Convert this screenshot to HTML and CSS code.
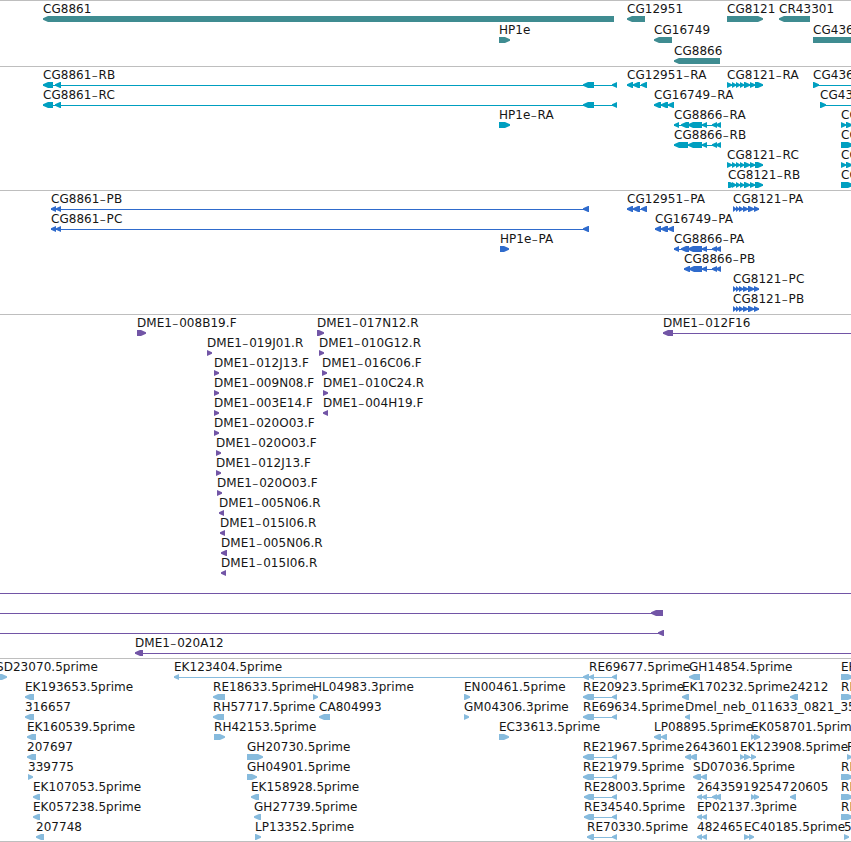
FILE: index.html
```
<!DOCTYPE html>
<html lang="en">
  <head>
    <meta charset="UTF-8" />
    <meta name="viewport" content="width=device-width, initial-scale=1.0" />
    <title>Genome tracks</title>
    <link rel="stylesheet" href="styles.css">
  </head>
  <body>
    <main class="browser">
      <section class="track genes" id="genes"></section>
      <section class="track transcripts" id="transcripts"></section>
      <section class="track proteins" id="proteins"></section>
      <section class="track bacs" id="bacs"></section>
      <section class="track ests" id="ests"></section>
    </main>
    <script src="tracks.js"></script>
  </body>
</html>
```

FILE: styles.css
```
* {
  box-sizing: border-box;
}

body {
  margin: 0;
  background: #fff;
}

.browser {
  height: 842px;
  overflow: hidden;
}

.track {
  border-top: 1px solid #bebebe;
  padding-bottom: 3px;
}

.row {
  display: block;
  width: 100%;
  height: 20px;
  overflow: visible;
}

.row text {
  font-family: "DejaVu Sans", sans-serif;
  font-size: 12px;
  letter-spacing: 0.04px;
  fill: #161616;
  white-space: pre;
}

.row .dash {
  font-size: 18px;
  font-weight: 200;
}

.row path {
  fill: currentColor;
}

.genes {
  color: #3f8c91;
  padding-bottom: 2px;
}

.genes .row {
  height: 21px;
}

.transcripts {
  color: #009fc0;
}

.proteins {
  color: #2f6bcc;
}

.bacs {
  color: #7255a6;
}

.ests {
  color: #87bbdd;
  padding-bottom: 2px;
  border-bottom: 1px solid #bebebe;
}
```

FILE: tracks.js
```
// feature: [label, x, direction, [[start, end], ...], [lineStart, lineEnd]]
const L = -1;
const R = 1;

const exons8121 = [[732, 736], [736, 740], [740, 744], [744, 750], [750, 755], [755, 763]];
const cds8121 = [[733, 736], [736, 739], [739, 743], [743, 748], [748, 754], [754, 759]];
const tail8866 = [[702, 707], [712, 717], [716, 721]];
const split = [[841, 846], [846, 852]];

const tracks = {
  genes: [
    [
      ["CG8861", 43, L, [[43, 614]]],
      ["CG12951", 627, L, [[627, 645]]],
      ["CG8121", 727, R, [[727, 763]]],
      ["CR43301", 779, L, [[779, 810]]],
    ],
    [
      ["HP1e", 499, R, [[499, 510]]],
      ["CG16749", 654, L, [[654, 672]]],
      ["CG436", 813, R, [[813, 870]]],
    ],
    [["CG8866", 674, L, [[674, 720]]]],
  ],
  transcripts: [
    [
      ["CG8861-RB", 43, L, [[43, 53], [55, 61], [583, 594], [612, 617]], [43, 617]],
      ["CG12951-RA", 627, L, [[627, 633], [633, 640], [641, 647]], [627, 647]],
      ["CG8121-RA", 727, R, [[727, 732], ...exons8121], [727, 763]],
      ["CG436", 813, R, [[813, 819]], [813, 860]],
    ],
    [
      ["CG8861-RC", 43, L, [[43, 53], [55, 61], [583, 594], [612, 617]], [43, 617]],
      ["CG16749-RA", 654, L, [[654, 661], [661, 668], [668, 674]], [654, 674]],
      ["CG43", 820, R, [[820, 826]], [820, 860]],
    ],
    [
      ["HP1e-RA", 499, R, [[499, 510]]],
      ["CG8866-RA", 674, L, [[674, 679], [681, 689], [688, 702], ...tail8866], [674, 721]],
      ["CG", 841, R, split],
    ],
    [
      ["CG8866-RB", 674, L, [[674, 688], [688, 702], ...tail8866], [674, 721]],
      ["CG", 841, R, [[841, 853]]],
    ],
    [
      ["CG8121-RC", 727, R, [[727, 732], ...exons8121], [727, 763]],
      ["CG", 841, R, split],
    ],
    [
      ["CG8121-RB", 728, R, [[728, 735], ...exons8121], [728, 763]],
      ["CG", 841, R, [[841, 853]]],
    ],
  ],
  proteins: [
    [
      ["CG8861-PB", 51, L, [[51, 56], [56, 61], [583, 589]], [51, 589]],
      ["CG12951-PA", 627, L, [[627, 633], [633, 640], [641, 647]], [627, 647]],
      ["CG8121-PA", 733, R, cds8121, [733, 759]],
    ],
    [
      ["CG8861-PC", 51, L, [[51, 56], [56, 61], [583, 589]], [51, 589]],
      ["CG16749-PA", 655, L, [[655, 661], [661, 668], [668, 674]], [655, 674]],
    ],
    [
      ["HP1e-PA", 500, R, [[500, 509]]],
      ["CG8866-PA", 674, L, [[674, 679], [681, 689], [688, 702], ...tail8866], [674, 721]],
    ],
    [["CG8866-PB", 684, L, [[684, 690], [689, 702], ...tail8866], [684, 721]]],
    [["CG8121-PC", 733, R, cds8121, [733, 759]]],
    [["CG8121-PB", 733, R, cds8121, [733, 759]]],
  ],
  bacs: [
    [
      ["DME1-008B19.F", 137, R, [[137, 146]]],
      ["DME1-017N12.R", 317, R, [[317, 324]]],
      ["DME1-012F16", 663, L, [[663, 673]], [663, 860]],
    ],
    [
      ["DME1-019J01.R", 207, R, [[207, 212]]],
      ["DME1-010G12.R", 319, R, [[319, 324]]],
    ],
    [
      ["DME1-012J13.F", 214, R, [[214, 219]]],
      ["DME1-016C06.F", 322, R, [[322, 327]]],
    ],
    [
      ["DME1-009N08.F", 214, R, [[214, 219]]],
      ["DME1-010C24.R", 323, R, [[323, 328]]],
    ],
    [
      ["DME1-003E14.F", 214, R, [[214, 219]]],
      ["DME1-004H19.F", 323, L, [[323, 328]]],
    ],
    [["DME1-020O03.F", 214, R, [[214, 219]]]],
    [["DME1-020O03.F", 216, R, [[216, 221]]]],
    [["DME1-012J13.F", 216, R, [[216, 221]]]],
    [["DME1-020O03.F", 217, R, [[217, 222]]]],
    [["DME1-005N06.R", 219, L, [[219, 224]]]],
    [["DME1-015I06.R", 220, L, [[220, 225]]]],
    [["DME1-005N06.R", 221, L, [[221, 227]]]],
    [["DME1-015I06.R", 221, L, [[221, 226]]]],
    [["", 0, L, [], [0, 851]]],
    [["", 0, L, [[651, 663]], [0, 663]]],
    [["", 0, L, [[658, 664]], [0, 664]]],
    [["DME1-020A12", 135, L, [[135, 143]], [135, 851]]],
  ],
  ests: [
    [
      ["SD23070.5prime", -4, R, [[-5, 7]]],
      ["EK123404.5prime", 174, L, [[174, 179], [583, 589]], [174, 589]],
      ["RE69677.5prime", 589, L, [[589, 594], [612, 617]], [589, 617]],
      ["GH14854.5prime", 689, L, [[689, 700]]],
      ["EH", 841, R, [[841, 853]]],
    ],
    [
      ["EK193653.5prime", 25, L, [[25, 34]]],
      ["RE18633.5prime", 213, L, [[213, 225]]],
      ["HL04983.3prime", 313, R, [[313, 318]]],
      ["EN00461.5prime", 464, R, [[464, 470]]],
      ["RE20923.5prime", 583, L, [[583, 594], [612, 617]], [583, 617]],
      ["EK170232.5prime", 682, L, [[682, 689]]],
      ["24212", 790, L, [[790, 798]]],
      ["RE", 841, R, [[841, 853]]],
    ],
    [
      ["316657", 25, L, [[25, 34]]],
      ["RH57717.5prime", 213, L, [[213, 224]]],
      ["CA804993", 319, L, [[319, 330]]],
      ["GM04306.3prime", 464, R, [[464, 469]]],
      ["RE69634.5prime", 583, L, [[583, 594], [612, 617]], [583, 617]],
      ["Dmel_neb_011633_0821_35", 685, L, [[685, 690]]],
    ],
    [
      ["EK160539.5prime", 27, L, [[27, 36]]],
      ["RH42153.5prime", 214, R, [[214, 225]]],
      ["EC33613.5prime", 499, R, [[499, 509]]],
      ["LP08895.5prime", 654, L, [[654, 661], [661, 667]]],
      ["EK058701.5prime", 751, R, [[751, 755], [754, 760]]],
    ],
    [
      ["207697", 27, L, [[27, 36]]],
      ["GH20730.5prime", 247, R, [[247, 263]]],
      ["RE21967.5prime", 583, L, [[583, 594], [612, 617]], [583, 617]],
      ["2643601", 685, L, [[685, 691], [690, 697]]],
      ["EK123908.5prime", 740, R, [[740, 744], [744, 750], [751, 756]], [740, 756]],
      ["R", 847, R, [[847, 852]]],
    ],
    [
      ["339775", 28, R, [[28, 33]]],
      ["GH04901.5prime", 247, R, [[247, 257]]],
      ["RE21979.5prime", 583, L, [[583, 594], [612, 617]], [583, 617]],
      ["SD07036.5prime", 693, L, [[693, 701], [701, 707]]],
      ["RE", 841, R, [[841, 853]]],
    ],
    [
      ["EK107053.5prime", 33, L, [[33, 40]]],
      ["EK158928.5prime", 251, L, [[251, 259]]],
      ["RE28003.5prime", 584, L, [[584, 594], [612, 617]], [584, 617]],
      ["2643591", 697, L, [[697, 702], [702, 707], [712, 717], [715, 721]], [697, 721]],
      ["92547", 751, R, [[751, 755], [754, 759]]],
      ["20605", 790, L, [[790, 796]]],
      ["RE", 841, R, [[841, 853]]],
    ],
    [
      ["EK057238.5prime", 33, L, [[33, 40]]],
      ["GH27739.5prime", 254, L, [[254, 261]]],
      ["RE34540.5prime", 584, L, [[584, 594], [612, 617]], [584, 617]],
      ["EP02137.3prime", 697, L, [[697, 702], [702, 707]]],
      ["RE", 841, R, [[841, 853]]],
    ],
    [
      ["207748", 36, L, [[36, 44]]],
      ["LP13352.5prime", 255, R, [[255, 261]]],
      ["RE70330.5prime", 587, L, [[587, 594], [612, 617]], [587, 617]],
      ["482465", 697, L, [[697, 702], [702, 707]]],
      ["EC40185.5prime", 744, R, [[744, 749], [749, 754]]],
      ["5", 844, R, [[844, 849]]],
    ],
  ],
};

// block with a tapered head on the side it is read towards
function arrow([start, end], direction) {
  const head = Math.min(end - start, 5);
  return direction === L
    ? `M${start} 17.2L${start + head} 15H${end}V21H${start + head}L${start} 18.8Z`
    : `M${end} 17.2L${end - head} 15H${start}V21H${end - head}L${end} 18.8Z`;
}

function feature([label, x, direction, blocks, line]) {
  const shapes = blocks.map((block) => `<path d="${arrow(block, direction)}" />`).join("");
  const link = line ? `<path d="M${line[0]} 18H${line[1]}V19H${line[0]}Z" />` : "";
  const [name, suffix] = label.split("-");
  const text = suffix
    ? `${name}<tspan class="dash" dy="1.5">-</tspan><tspan dx="0.6" dy="-1.5">${suffix}</tspan>`
    : name;
  return `${link}${shapes}<text x="${x}" y="12">${text}</text>`;
}

for (const [id, rows] of Object.entries(tracks)) {
  document.getElementById(id).innerHTML = rows
    .map((row) => `<svg class="row">${row.map(feature).join("")}</svg>`)
    .join("");
}
```
